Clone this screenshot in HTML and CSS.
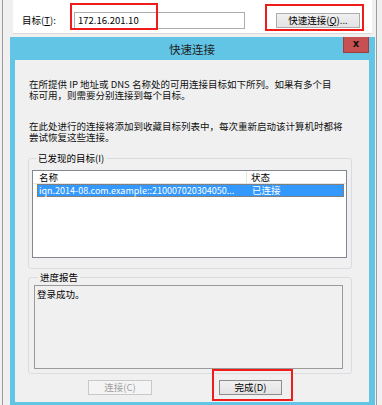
FILE: index.html
```html
<!DOCTYPE html>
<html lang="zh-CN">
<head>
<meta charset="UTF-8">
<title>快速连接</title>
<link rel="stylesheet" href="styles.css">
</head>
<body>

<div class="host">
    <div class="target-bar">
        <label class="target-label">目标(<u>T</u>):</label>
        <div class="mark-wrap">
            <div class="target-input">172.16.201.10</div>
            <span class="redbox redbox-input"></span>
        </div>
        <div class="mark-wrap quick-wrap">
            <button class="btn btn-quick">快速连接(<u>Q</u>)...</button>
            <span class="redbox redbox-quick"></span>
        </div>
    </div>

    <div class="dialog">
        <div class="titlebar">
            <span></span>
            <span class="title">快速连接</span>
            <span class="close">x</span>
        </div>

        <div class="client">
            <p class="note">在所提供 IP 地址或 DNS 名称处的可用连接目标如下所列。如果有多个目<br>标可用，则需要分别连接到每个目标。</p>
            <p class="note note-second">在此处进行的连接将添加到收藏目标列表中，每次重新启动该计算机时都将<br>尝试恢复这些连接。</p>

            <fieldset class="group group-found">
                <legend>已发现的目标(I)</legend>
                <div class="listview">
                    <div class="lv-head">
                        <span class="col-name">名称</span>
                        <span class="col-state">状态</span>
                    </div>
                    <div class="lv-row selected">
                        <span class="col-name">iqn.2014-08.com.example::210007020304050...</span>
                        <span class="col-state">已连接</span>
                    </div>
                </div>
            </fieldset>

            <fieldset class="group group-progress">
                <legend>进度报告</legend>
                <div class="log">登录成功。</div>
            </fieldset>

            <div class="actions">
                <button class="btn btn-connect" disabled>连接(C)</button>
                <div class="mark-wrap">
                    <button class="btn btn-done">完成(D)</button>
                    <span class="redbox redbox-done"></span>
                </div>
            </div>
        </div>
    </div>
</div>

</body>
</html>
```

FILE: styles.css
```css
body {
    margin: 0;
    background-color: #f0f0f0;
    font-family: "Noto Sans CJK SC", sans-serif;
    font-size: 9.5px;
    color: #000;
    overflow: hidden;
}

u {
    text-decoration: underline;
}

.host {
    margin-left: 2px;
    width: 375px;
    height: 405px;
    border-left: 1px solid #9c9c9c;
    border-right: 1px solid #9c9c9c;
    box-sizing: border-box;
    overflow: hidden;
}

/* parent window strip */
.target-bar {
    display: flex;
    align-items: flex-start;
    margin-left: 10px;
    width: 359px;
    height: 34px;
    padding: 12px 0 0 9px;
    background-color: #fff;
    border-bottom: 1px solid #dadada;
    box-sizing: border-box;
}

.target-label {
    width: 52px;
    line-height: 17px;
}

.mark-wrap {
    position: relative;
}

.target-input {
    width: 171px;
    height: 17px;
    padding-left: 3px;
    line-height: 15px;
    background-color: #fff;
    border: 1px solid #abadb3;
    box-sizing: border-box;
}

.quick-wrap {
    margin: 1px 0 0 31px;
}

.redbox {
    position: absolute;
    border: 2px solid #f01c1c;
    pointer-events: none;
}

.redbox-input {
    left: -4px;
    top: -9px;
    width: 88px;
    height: 27px;
    box-sizing: border-box;
}

.redbox-quick {
    left: -11px;
    top: -9px;
    right: -4px;
    bottom: -3px;
}

.redbox-done {
    left: -7px;
    top: -11px;
    right: -11px;
    bottom: -6px;
}

.btn {
    display: block;
    height: 15px;
    padding: 0;
    font-family: inherit;
    font-size: 9.5px;
    line-height: 13px;
    color: #000;
    background: linear-gradient(#f0f0f0, #e3e3e3);
    border: 1px solid #acacac;
    box-sizing: border-box;
}

.btn-quick {
    width: 84px;
}

.btn-connect {
    width: 64px;
    color: #a0a0a0;
    background: #f4f4f4;
    border-color: #c8c8c8;
}

.btn-done {
    width: 63px;
    border-color: #8c8c8c;
}

/* dialog window */
.dialog {
    margin: 3px 0 0 7px;
    width: 365px;
    padding: 0 6px 3px 5px;
    background-color: #62c5e6;
    box-sizing: border-box;
}

.titlebar {
    display: grid;
    grid-template-columns: 26px 1fr 26px;
    height: 23px;
}

.title {
    text-align: center;
    font-size: 11.5px;
    line-height: 24px;
    color: #1e1e1e;
}

.close {
    height: 16px;
    background-color: #c75050;
    border: 1px solid #9f3d3d;
    border-top: none;
    box-sizing: border-box;
    text-align: center;
    font-family: "DejaVu Sans", sans-serif;
    font-weight: bold;
    font-size: 10px;
    line-height: 13px;
    color: #111;
}

.client {
    height: 342px;
    padding: 19px 0 0 0;
    background-color: #f0f0f0;
    box-sizing: border-box;
}

.note {
    margin: 0 0 0 14px;
    line-height: 11px;
    white-space: nowrap;
    color: #111;
}

.note-second {
    margin-top: 20px;
}

.group {
    margin: 0 0 0 13px;
    width: 324px;
    padding: 0;
    border: 1px solid #d8dde2;
    border-radius: 3px;
    box-sizing: border-box;
}

.group legend {
    margin-left: 4px;
    padding: 0 2px;
    line-height: 10px;
}

.group-found {
    margin-top: 10px;
    padding: 0 0 10px 3px;
}

.group-progress {
    margin-top: 3px;
    padding: 0 0 4px 5px;
}

.listview {
    margin-top: 7px;
    width: 315px;
    height: 88px;
    background-color: #fff;
    border: 1px solid #828790;
    box-sizing: border-box;
}

.lv-head {
    display: flex;
    height: 13px;
    line-height: 12px;
    border-bottom: 1px solid #e5e5e5;
    box-sizing: border-box;
}

.lv-head .col-name {
    width: 214px;
    padding-left: 6px;
    border-right: 1px solid #e5e5e5;
    box-sizing: border-box;
}

.lv-head .col-state {
    padding-left: 4px;
}

.lv-row {
    display: flex;
    margin-left: 4px;
    width: 307px;
    height: 13px;
    line-height: 11px;
    box-sizing: border-box;
}

.lv-row.selected {
    color: #fff;
    background-color: #3399ff;
    border: 1px dotted #cc6600;
}

.lv-row .col-name {
    width: 209px;
    flex-shrink: 0;
    padding-left: 1px;
    font-size: 9px;
    white-space: nowrap;
}

.lv-row .col-state {
    padding-left: 4px;
}

.log {
    margin-top: 3px;
    width: 309px;
    height: 84px;
    padding: 3px 0 0 2px;
    line-height: 10px;
    background-color: #f0f0f0;
    border: 1px solid #9a9a9a;
    box-sizing: border-box;
}

.actions {
    display: flex;
    gap: 67px;
    margin: 6px 0 0 73px;
}
```
